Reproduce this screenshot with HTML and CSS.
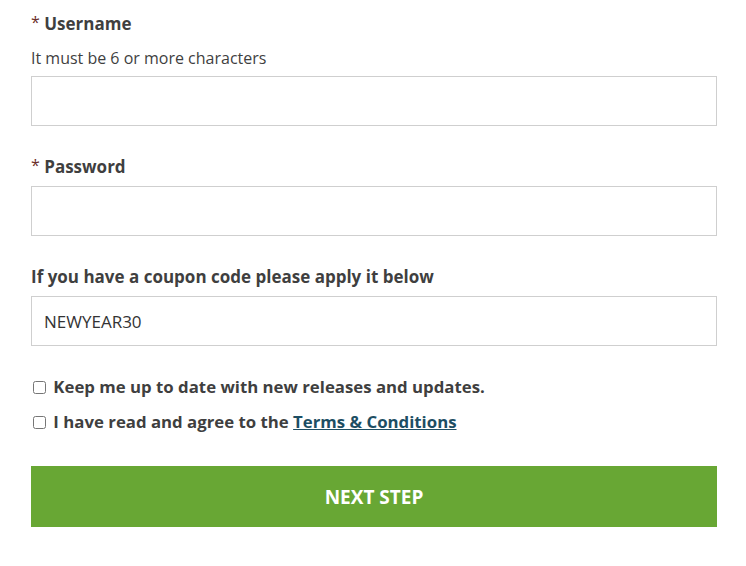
FILE: index.html
```html
<!DOCTYPE html>
<html lang="en">
<head>
    <meta charset="UTF-8">
    <meta name="viewport" content="width=device-width, initial-scale=1.0">
    <title>Create account</title>
    <link rel="stylesheet" href="styles.css">
</head>
<body>
    <form class="signup">
        <div class="field">
            <label class="field-label" for="username"><span class="req">*</span> Username</label>
            <p class="hint">It must be 6 or more characters</p>
            <input class="text-input" type="text" id="username">
        </div>
        <div class="field">
            <label class="field-label" for="password"><span class="req">*</span> Password</label>
            <input class="text-input" type="password" id="password">
        </div>
        <div class="field">
            <label class="field-label" for="coupon">If you have a coupon code please apply it below</label>
            <input class="text-input" type="text" id="coupon" value="NEWYEAR30">
        </div>
        <div class="checks">
            <label class="check"><input type="checkbox"> Keep me up to date with new releases and updates.</label>
            <label class="check"><input type="checkbox"> I have read and agree to the <a href="#">Terms &amp; Conditions</a></label>
        </div>
        <button type="button" class="next-btn">NEXT STEP</button>
    </form>
</body>
</html>
```

FILE: styles.css
```css
body {
    font-family: 'Open Sans', sans-serif;
    margin: 0;
    padding: 14px 29px 0 31px;
    background-color: #fff;
    color: #3f3f3f;
}
.signup {
    width: 686px;
}
.field {
    margin-bottom: 31px;
}
.field-label {
    display: block;
    height: 20px;
    font-size: 17px;
    font-weight: bold;
    line-height: 20px;
    margin-bottom: 9px;
}
.req {
    font-size: 16px;
    font-weight: normal;
    line-height: 0;
    color: #6b2f2a;
    vertical-align: 2px;
}
.hint {
    margin: 14px 0 8px;
    font-size: 16px;
    line-height: 20px;
}
.text-input {
    display: block;
    box-sizing: border-box;
    width: 100%;
    height: 50px;
    padding: 0 12px;
    border: 1px solid #cfcfcf;
    border-radius: 0;
    font-family: inherit;
    font-size: 17px;
    color: #333;
}
.checks {
    margin-top: -2px;
}
.check {
    display: block;
    height: 24px;
    line-height: 24px;
    margin-bottom: 11px;
    font-size: 16.8px;
    font-weight: bold;
}
.check input {
    margin: 0 3px 0 2px;
    width: 13px;
    height: 13px;
    vertical-align: -1px;
}
.check a {
    color: #1d4e63;
}
.next-btn {
    display: block;
    width: 100%;
    height: 61px;
    margin-top: 32px;
    border: 0;
    background-color: #68a734;
    color: #fff;
    font-family: inherit;
    font-size: 19px;
    font-weight: bold;
    cursor: pointer;
}
```
